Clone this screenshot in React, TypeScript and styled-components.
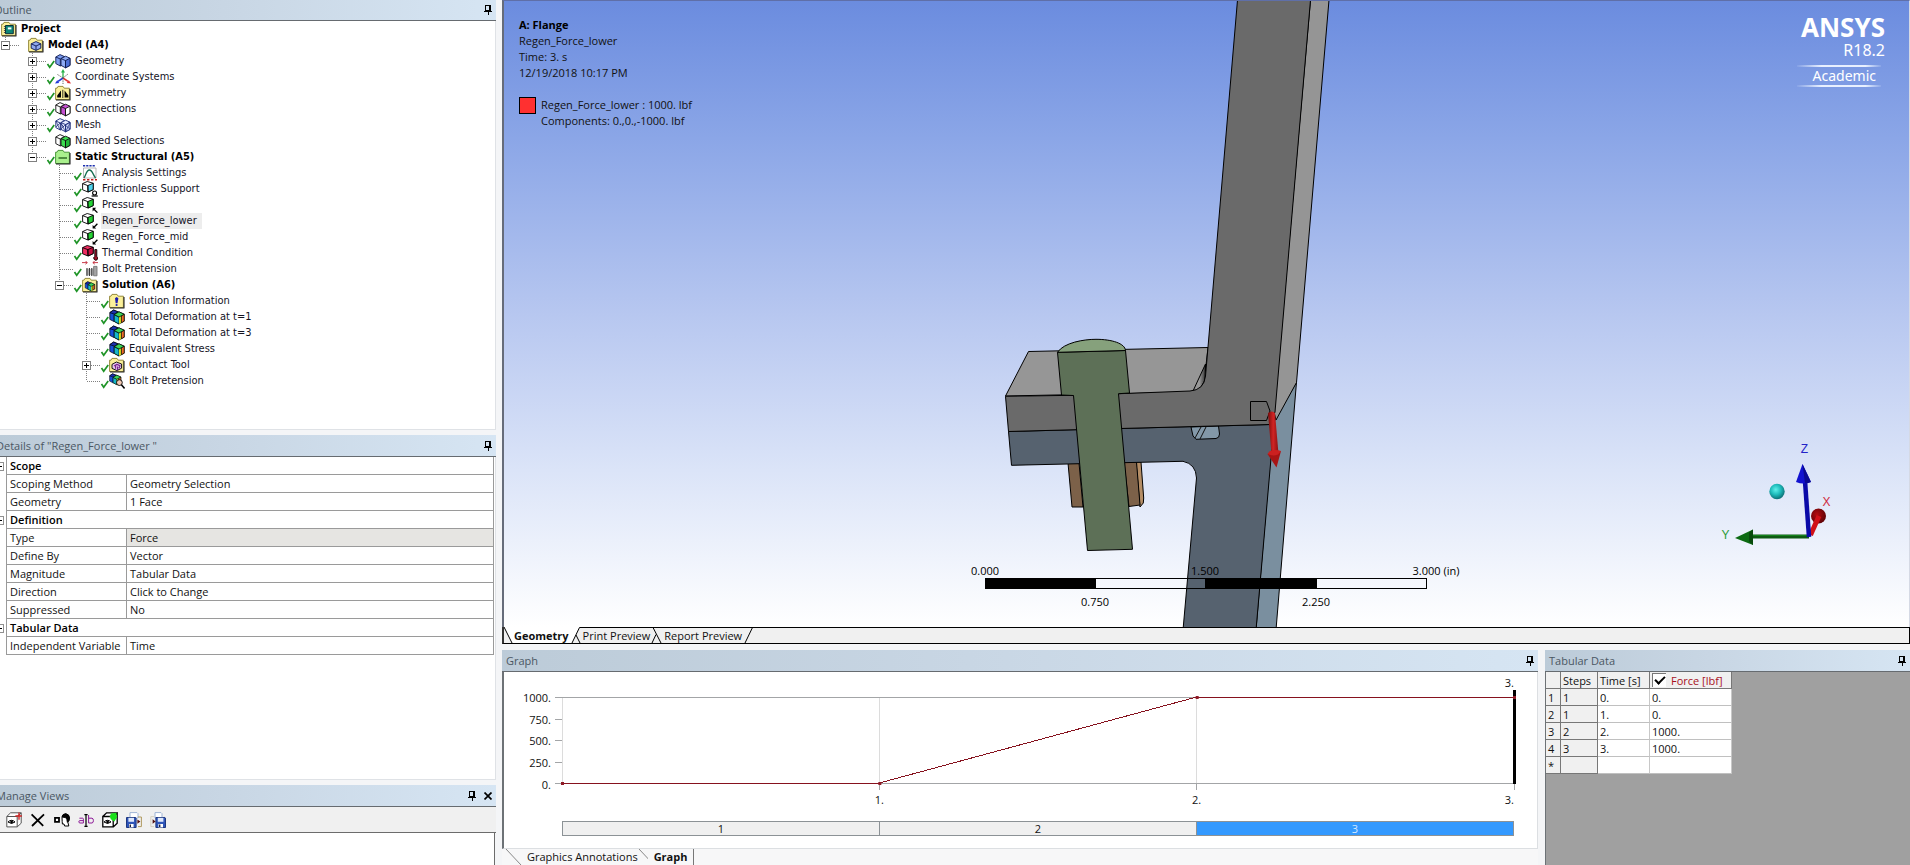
import React, { ReactNode } from 'react';
import styled, { createGlobalStyle, css } from 'styled-components';

const ui = '"Open Sans", "Noto Sans", sans-serif';
const treeFont = '"DejaVu Sans Condensed", "DejaVu Sans", sans-serif';

const Global = createGlobalStyle`
  * { box-sizing: border-box; }
  body { margin: 0; background: #f4f5f7; color: #111; font: 11px/16px ${ui}; }
  button { font: inherit; color: inherit; border: 0; padding: 0; background: none; }
  svg { display: block; flex: none; }
`;

/* ---------- shell ---------- */
const Shell = styled.div`
  display: grid;
  grid-template-columns: 496px minmax(0, 1fr);
  column-gap: 6px;
  height: 100vh;
  overflow: hidden;
`;
const SideColumn = styled.aside`
  display: grid;
  grid-template-rows: 430fr 345fr 80fr;
  row-gap: 5px;
  min-height: 0;
`;
const MainColumn = styled.main`
  display: grid;
  grid-template-rows: 644fr 215fr;
  row-gap: 6px;
  min-height: 0;
`;
const BottomRow = styled.div`
  display: grid;
  grid-template-columns: minmax(0, 1fr) 365px;
  column-gap: 7px;
  min-height: 0;
`;
const Panel = styled.section`
  display: flex;
  flex-direction: column;
  min-width: 0;
  min-height: 0;
  overflow: hidden;
`;
const TitleBar = styled.header<{ $short?: boolean }>`
  display: flex;
  align-items: center;
  gap: 8px;
  flex: none;
  height: ${(p) => (p.$short ? 21 : 22)}px;
  padding: 0 4px;
  border-bottom: 1px solid #666b70;
  background: linear-gradient(90deg, #bccbd8, #c8d6e4 45%, #d6e5f3);
  color: #4b5763;
`;
const Title = styled.h2<{ $cut: number }>`
  flex: 1;
  margin: 0 0 0 ${(p) => -p.$cut}px;
  font: 11px/16px ${ui};
  white-space: pre;
`;
const IconButton = styled.button`
  display: flex;
`;

const Pin = () => (
  <IconButton aria-label="Pin panel">
    <svg width="8" height="12" viewBox="0 0 8 12" fill="none" stroke="#000" shapeRendering="crispEdges">
      <path d="M1.5 1.5h4v5h-4zM0 7.5h8M4 8v3" />
      <path d="M5.5 1v6" strokeWidth="2" />
    </svg>
  </IconButton>
);
const Close = () => (
  <IconButton aria-label="Close panel">
    <svg width="8" height="8" viewBox="0 0 8 8" stroke="#000" strokeWidth="1.7">
      <path d="M0.5 .5l7 7M7.5 .5l-7 7" />
    </svg>
  </IconButton>
);

/* ---------- outline icons ---------- */
const Ico = ({ children }: { children: ReactNode }) => (
  <svg width="16" height="16" viewBox="0 0 16 16" fill="none" stroke="#000" strokeWidth="0.9" strokeLinejoin="round">
    {children}
  </svg>
);
const Folder = ({ fill = '#fbf09a', edge = '#8a7f2e', children }: { fill?: string; edge?: string; children?: ReactNode }) => (
  <Ico>
    <path d="M.6 14.5V3.2H2L3 1.4h5l1.2 1.8h5.2v11.3z" fill={fill} stroke={edge} />
    <path d="M1 15h14V4" stroke="#222" strokeWidth="1.1" />
    {children}
  </Ico>
);
const TwinCubes = ({ back, front, face, line = '#111', mesh }: { back: string; front: string; face: string; line?: string; mesh?: boolean }) => (
  <Ico>
    <g stroke={line}>
      <path d="M.8 4 5 1.6 9.5 3.6v7L5.3 13 .8 10.6z" fill={back} />
      <path d="M.8 4l4.5 2 4.2-2.4M5.3 6v7" />
      <path d="M6 5.6l4.6-2.4L15 5.2v7.2l-4.5 2.4L6 12.4z" fill={front} />
      <path d="M10.5 7.6 15 5.2v7.2l-4.5 2.4z" fill={face} />
      <path d="M6 5.6l4.5 2v7.2" />
      {mesh && <path d="M1 4l4 9M1 10l4-4 4 4M6 6l4 8M6 12l4-4 5 4M11 8l4-3M11 14l4-8" strokeWidth=".7" />}
    </g>
  </Ico>
);
const Contour = () => (
  <g strokeWidth=".7">
    <path d="M.8 3.6 4.6 1l4.8 2v7L5 12.6.8 10.4z" fill="#1550d8" />
    <path d="M.8 3.6 4.6 1l4.8 2L5.4 5.2z" fill="#1b2fae" />
    <path d="M5.2 5.6 10 2.8l5.2 2.4v7L10 15l-4.8-2.6z" fill="#21c048" />
    <path d="M5.2 5.6 10 8v7l-4.8-2.6z" fill="#16b7c9" />
    <path d="M10 8l2.4-1.3v7L10 15z" fill="#d8e020" stroke="none" />
    <path d="M12.4 6.7l2.8-1.5v7l-2.8 1.5z" fill="#f0692a" />
    <path d="M5.2 5.6 10 2.8l5.2 2.4L10 8z" fill="#3bd35a" />
  </g>
);
const LoadCube = ({ face = '#25d335', top = '#fff', children }: { face?: string; top?: string; children?: ReactNode }) => (
  <Ico>
    <path d="M.6 2.6 5.2.5l6 1.7v6.4L6 11 .6 8.8z" fill={top} />
    <path d="M5.8 4.6l5.4-2.4v6.4L6 11z" fill={face} />
    <path d="M.6 2.6 5.8 4.6 6 11" />
    {children}
  </Ico>
);
const ArrowUp = () => (
  <>
    <path d="M15.4 15.6l-3.400-3.400" strokeWidth="1.3" />
    <path d="M10.600 14.400v-3.600h3.600z" fill="#000" stroke="none" />
  </>
);
const ArrowDown = () => (
  <>
    <path d="M15.400 10.800l-3.400 3.400" strokeWidth="1.3" />
    <path d="M10.600 12v3.600h3.600z" fill="#000" stroke="none" />
  </>
);

const icons: Record<string, ReactNode> = {
  project: (
    <Folder>
      <path d="M4.5 4.5h7.8v8.2H4.5z" fill="#0d8576" stroke="#023" />
      <path d="M6.8 6.4h3.6v2H6.8z" fill="#fff" stroke="none" />
      <path d="M3.4 5v8" stroke="#333" strokeDasharray="1 1" />
    </Folder>
  ),
  model: (
    <Folder>
      <path d="M3.2 6.8 8 4.6l4.8 2.2v4.4L8 13.4l-4.8-2.2z" fill="#8fa8ee" stroke="#0b1650" />
      <path d="M3.2 6.8 8 9l4.8-2.2M8 9v4.4" stroke="#0b1650" />
    </Folder>
  ),
  geometry: <TwinCubes back="#7d9df0" front="#8eabf5" face="#4d70d8" line="#101c50" />,
  axes: (
    <Ico>
      <path d="M8 9V2" stroke="#28b04a" strokeWidth="1.3" />
      <path d="M8 0l-2 3.6h4z" fill="#28b04a" stroke="none" />
      <path d="M8 9l5 3.4" stroke="#e03030" strokeWidth="1.6" />
      <path d="M16 14.4l-4.2-.4 2-2.8z" fill="#e03030" stroke="none" />
      <path d="M8 9l-5 3.4" stroke="#2038d8" strokeWidth="1.6" />
      <path d="M0 14.4l4.2-.4-2-2.8z" fill="#2038d8" stroke="none" />
      <path d="M2.5 5.5 8 9l5-4M8 9v6" stroke="#555" strokeDasharray="1.4 1" />
    </Ico>
  ),
  symmetry: (
    <Folder>
      <path d="M6 5.400v7H2.200V10.400z M9.600 5.400v7h3.800V10.400z" fill="#000" stroke="none" />
      <path d="M7.800 4.800v8.200" strokeWidth=".8" />
    </Folder>
  ),
  connections: <TwinCubes back="#fff" front="#c44fd0" face="#fff" />,
  mesh: <TwinCubes back="#eef1ff" front="#e6ebff" face="#cfd8fb" line="#1c2b78" mesh />,
  named: <TwinCubes back="#fff" front="#3ddc50" face="#22b838" />,
  structural: (
    <Folder fill="#a9f08d" edge="#3c8a2c">
      <path d="M3.5 9h8.5" stroke="#144d10" strokeWidth="1.2" />
    </Folder>
  ),
  settings: (
    <Ico>
      <path d="M1 .8h12" stroke="#1b2fae" strokeWidth="1.5" strokeDasharray="2.2 1" />
      <path d="M1.5 3h12.5v10H1.5z" stroke="#9a9a9a" strokeWidth=".7" />
      <path d="M2 13C4 10 4.4 5 7.4 5S11 10 13.6 13" stroke="#146c50" strokeWidth="1.3" />
      <path d="M1 14.8h14" stroke="#c01818" strokeWidth="1.6" strokeDasharray="2.4 1.6" />
    </Ico>
  ),
  support: (
    <LoadCube face="#4fd4ee">
      <circle cx="12.6" cy="12" r="2" fill="#fff" strokeWidth="1.1" />
      <path d="M9.6 15h6.2" strokeWidth="1.2" />
    </LoadCube>
  ),
  pressure: <LoadCube><ArrowUp /></LoadCube>,
  force: <LoadCube><ArrowDown /></LoadCube>,
  thermal: (
    <LoadCube face="#c80f40" top="#ee2c60">
      <path d="M12.8 4.6h2v6.8a2 2 0 1 1-2 0z" fill="#a01028" />
    </LoadCube>
  ),
  bolt: (
    <Ico>
      <path d="M0 1.6h5M3.4 0l2 1.6-2 1.6M16 1.6h-5M12.8 0l-2 1.6 2 1.6" stroke="#c22838" />
      <path d="M4 8h9v6H4z" fill="#c9c9c9" stroke="none" />
      <path d="M5 7v8M7.4 7v8M9.8 7v8" stroke="#333" strokeWidth="1.1" />
      <path d="M11.6 5.4H15v9.4h-3.4z" fill="#a4a4a4" stroke="#777" />
    </Ico>
  ),
  solution: (
    <Folder>
      <g transform="translate(2.6 4) scale(.66)"><Contour /></g>
    </Folder>
  ),
  info: (
    <Folder>
      <path d="M7.6 4l1.8 1.2-.9 5h-1.8L6 5.2z" fill="#1a1ab0" stroke="none" />
      <circle cx="7.6" cy="12" r="1.1" fill="#1a1ab0" stroke="none" />
    </Folder>
  ),
  contour: <Ico><Contour /></Ico>,
  contact: (
    <Folder>
      <path d="M3 7.4 7.4 5l5.2 2v4.2L8 13.6 3 11.4z" fill="#e5c8ec" />
      <path d="M5 9l3-1.6 3 1.4-1 2.4M6.6 8.4v3.4M8.6 9.4v4" stroke="#7a2390" strokeWidth="1.2" />
    </Folder>
  ),
  probe: (
    <Ico>
      <g transform="scale(.78)"><Contour /></g>
      <circle cx="10.4" cy="9.6" r="2.9" fill="#f2c9b4" />
      <path d="M12.4 11.8l3.2 3.6" strokeWidth="1.6" />
    </Ico>
  ),
};

/* ---------- outline tree ---------- */
const Tree = styled.ul`
  flex: 1;
  margin: 0;
  padding: 0 0 0 1px;
  list-style: none;
  background: #fff;
  border-right: 1px solid #dfe2e6;
  border-bottom: 1px solid #dfe2e6;
  font: 11px/16px ${treeFont};
  overflow: hidden;
`;
const TreeRow = styled.li`
  display: flex;
  height: 16px;
  white-space: nowrap;
`;
const GuideCell = styled.span`
  display: flex;
  position: relative;
  flex: none;
  width: 27px;
  height: 16px;
`;
const Expander = styled.button`
  position: absolute;
  left: 0;
  top: 4px;
  width: 9px;
  height: 9px;
`;
const TreeLabel = styled.span<{ $bold?: boolean; $selected?: boolean }>`
  margin-left: 3px;
  padding: 0 5px 0 1px;
  color: #14141f;
  ${(p) => p.$bold && css`font-weight: 700; color: #000;`}
  ${(p) => p.$selected && css`background: #ededed;`}
`;

type Node = { d: number; t: string; i: string; x?: '+' | '-'; ok?: boolean; bold?: boolean; sel?: boolean };
const nodes: Node[] = [
  { d: 0, t: 'Project', i: 'project', bold: true },
  { d: 1, t: 'Model (A4)', i: 'model', x: '-', bold: true },
  { d: 2, t: 'Geometry', i: 'geometry', x: '+', ok: true },
  { d: 2, t: 'Coordinate Systems', i: 'axes', x: '+', ok: true },
  { d: 2, t: 'Symmetry', i: 'symmetry', x: '+', ok: true },
  { d: 2, t: 'Connections', i: 'connections', x: '+', ok: true },
  { d: 2, t: 'Mesh', i: 'mesh', x: '+', ok: true },
  { d: 2, t: 'Named Selections', i: 'named', x: '+' },
  { d: 2, t: 'Static Structural (A5)', i: 'structural', x: '-', ok: true, bold: true },
  { d: 3, t: 'Analysis Settings', i: 'settings', ok: true },
  { d: 3, t: 'Frictionless Support', i: 'support', ok: true },
  { d: 3, t: 'Pressure', i: 'pressure', ok: true },
  { d: 3, t: 'Regen_Force_lower', i: 'force', ok: true, sel: true },
  { d: 3, t: 'Regen_Force_mid', i: 'force', ok: true },
  { d: 3, t: 'Thermal Condition', i: 'thermal', ok: true },
  { d: 3, t: 'Bolt Pretension', i: 'bolt', ok: true },
  { d: 3, t: 'Solution (A6)', i: 'solution', x: '-', ok: true, bold: true },
  { d: 4, t: 'Solution Information', i: 'info', ok: true },
  { d: 4, t: 'Total Deformation at t=1', i: 'contour', ok: true },
  { d: 4, t: 'Total Deformation at t=3', i: 'contour', ok: true },
  { d: 4, t: 'Equivalent Stress', i: 'contour', ok: true },
  { d: 4, t: 'Contact Tool', i: 'contact', x: '+', ok: true },
  { d: 4, t: 'Bolt Pretension', i: 'probe', ok: true },
];
const continues = (row: number, level: number) => {
  for (let k = row + 1; k < nodes.length; k++) {
    if (nodes[k].d < level) return false;
    if (nodes[k].d === level) return true;
  }
  return false;
};

const Guide = ({ row, level }: { row: number; level: number }) => {
  const n = nodes[row];
  const own = n.d === level;
  const more = continues(row, level);
  return (
    <GuideCell>
      <svg width="27" height="16" viewBox="0 0 27 16" fill="none">
        <g stroke="#808080" strokeDasharray="1 1" shapeRendering="crispEdges">
          {own && <path d="M4.5 0v8" />}
          {own && <path d="M5 8.5h13" />}
          {more && <path d="M4.5 0v16" />}
        </g>
        {own && n.ok && <path d="M19.5 11l2.2 3.2L26.2 8" stroke="#1f9427" strokeWidth="1.7" />}
      </svg>
      {own && n.x && (
        <Expander aria-label={n.x === '+' ? 'Expand' : 'Collapse'}>
          <svg width="9" height="9" viewBox="0 0 9 9" fill="#fff" shapeRendering="crispEdges">
            <path d="M.5.5h8v8h-8z" stroke="#808080" />
            <path d={n.x === '+' ? 'M2 4.5h5M4.5 2v5' : 'M2 4.5h5'} stroke="#000" />
          </svg>
        </Expander>
      )}
    </GuideCell>
  );
};

/* ---------- details ---------- */
const DetailsBody = styled.div`
  flex: 1;
  background: #fff;
  border-right: 1px solid #dfe2e6;
  border-bottom: 1px solid #dfe2e6;
`;
const DetailsTable = styled.table`
  width: calc(100% - 1px);
  border-spacing: 0;
  table-layout: fixed;
  td, th {
    height: 18px;
    padding: 0 3px;
    border-right: 1px solid #9a9a9a;
    border-bottom: 1px solid #9a9a9a;
    line-height: 16px;
    text-align: left;
    font-weight: 400;
    white-space: nowrap;
  }
`;
const GroupHead = styled.th`
  && { font-weight: 600; color: #000; }
`;
const GutterCell = styled.td`
  && { padding: 0; border-bottom: 0; }
`;
const ValueCell = styled.td<{ $readonly?: boolean }>`
  background: ${(p) => (p.$readonly ? '#e6e5e2' : '#fff')};
`;
const GroupToggle = () => (
  <IconButton aria-label="Collapse group">
    <svg width="5" height="9" viewBox="0 0 5 9" fill="none" shapeRendering="crispEdges">
      <path d="M0 .5h3.5v8H0" stroke="#909090" />
      <path d="M0 4.5h2" stroke="#000" />
    </svg>
  </IconButton>
);
const details: [string, string?, boolean?][] = [
  ['Scope'],
  ['Scoping Method', 'Geometry Selection'],
  ['Geometry', '1 Face'],
  ['Definition'],
  ['Type', 'Force', true],
  ['Define By', 'Vector'],
  ['Magnitude', 'Tabular Data'],
  ['Direction', 'Click to Change'],
  ['Suppressed', 'No'],
  ['Tabular Data'],
  ['Independent Variable', 'Time'],
];

/* ---------- manage views ---------- */
const Toolbar = styled.div`
  display: flex;
  align-items: center;
  height: 26px;
  flex: none;
  padding-left: 2px;
  background: #f0f0f0;
  border-bottom: 1px solid #6c6c6c;
`;
const ToolButton = styled.button`
  display: flex;
  justify-content: center;
  width: 24px;
`;
const ViewList = styled.div`
  flex: 1;
  margin-right: 1px;
  background: #fff;
  border-right: 1px solid #6c6c6c;
`;
const Eye = () => (
  <>
    <path d="M2 10q3.5-3.4 7 0-3.5 3-7 0z" fill="#fff" stroke="#000" />
    <circle cx="5.6" cy="10" r="1.4" fill="#000" stroke="none" />
  </>
);
const Disk = ({ x }: { x: number }) => (
  <g transform={`translate(${x} 5)`}>
    <path d="M.5.5h9l.6.6v9.4H.5z" fill="#2f55b8" stroke="#1d3780" />
    <path d="M2.4.8h5.6v4H2.4z" fill="#dfe8fb" stroke="none" />
    <path d="M3 7h4.6v3.4H3z" fill="#fff" stroke="none" />
    <path d="M3.6 7.6h1.4v2.4H3.6z" fill="#223" stroke="none" />
  </g>
);
const tools: [string, ReactNode][] = [
  ['Create view', <>
    <path d="M.8 4.5h10.4v10.4H.8zM.8 4.5 4.6.8h10.6L11.2 4.5M15.2.8v10.4l-4 3.7" fill="#fff" stroke="#555" />
    <path d="M13 .6v7.2M9.4 4h6.4" stroke="#d02020" strokeWidth="1.3" />
    <Eye />
  </>],
  ['Delete view', <path d="M1.6 2.4l11.6 11.4M14 2.4 2 14" strokeWidth="1.8" />],
  ['Apply view', <>
    <path d="M1 5.8h4v4H1z" strokeWidth="1.8" fill="#fff" />
    <path d="M8 5.5Q8 2 11.5 2T15.4 6q0 2.6-1.6 4l1 4h-4.2l-.6-2H8.4l-.2-2.6z" fill="#fff" />
    <path d="M8 5q1-3.6 4-3.2 3.6.6 3.4 4.4-.2 3-2 4-.2-3-1.6-4.6z" fill="#000" />
  </>],
  ['Rename view', <>
    <path d="M8 3v11M6.4 2.6h3.2M6.4 14.4h3.2" strokeWidth="1.2" />
    <path d="M1.4 6.2h3.2q.8 0 .8.9V11H2q-1.2-.1-1.2-1.2T2 8.6h3.4" stroke="#8e1c98" />
    <path d="M10.6 3v8H14q1.4-.2 1.4-2.4T14 6.2h-3.4" stroke="#8e1c98" />
  </>],
  ['Replace view', <>
    <path d="M.8 4.5h10.4v10.4H.8zM.8 4.5 4.6.8h10.6L11.2 4.5M15.2.8v10.4l-4 3.7" fill="#fff" strokeWidth="1.3" />
    <path d="M9 1.6 14.4.8l.6 4.4-2.6 4.4-3.6-2.4-1-3z" fill="#18e018" stroke="none" />
    <Eye />
  </>],
  ['Import views', <>
    <path d="M4 .6h7l1 1V6H4z" fill="#fff" stroke="#9fb4d6" />
    <path d="M12 5h3.4v9.6H12" stroke="#b09a60" />
    <Disk x={0} />
    <path d="M11.4 7.4v4.4L14.4 9.6z" fill="#501010" stroke="none" />
  </>],
  ['Export views', <>
    <path d="M5 .6h6l1 1V6H5z" fill="#fff" stroke="#9fb4d6" />
    <path d="M4 4.6H.8v10H4" stroke="#d6d0c0" />
    <Disk x={5.4} />
    <path d="M2.6 7.2v4.6l3-2.3z" fill="#501010" stroke="none" />
  </>],
];

/* ---------- 3D viewport ---------- */
const Viewport = styled.div`
  position: relative;
  flex: 1;
  min-height: 0;
  overflow: hidden;
  border-left: 2px solid #666c7a;
  border-top: 1px solid #5f6fa8;
  border-right: 1px solid #d5d9e4;
  background: linear-gradient(#6b8cdf, #8ba6e7 22%, #b7c7f0 50%, #dbe4f8 75%, #ffffff);
`;
const Scene = styled.svg`
  width: 100%;
  height: 100%;
`;
const Caption = styled.div`
  position: absolute;
  left: 15px;
  top: 16px;
  white-space: nowrap;
`;
const CaptionTitle = styled.strong`
  display: block;
  font-weight: 700;
  color: #000;
`;
const Legend = styled.div`
  display: flex;
  align-items: flex-start;
  gap: 5px;
  margin-top: 16px;
`;
const Swatch = styled.span`
  width: 17px;
  height: 17px;
  border: 1px solid #000;
  background: #ff3030;
`;
const Brand = styled.div`
  position: absolute;
  right: 24px;
  top: 12px;
  display: flex;
  flex-direction: column;
  align-items: flex-end;
  color: #fff;
  font-family: "Noto Sans", sans-serif;
`;
const BrandName = styled.span`
  font-size: 26px;
  font-weight: 700;
  line-height: 28px;
`;
const BrandRelease = styled.span`
  font-size: 16px;
  line-height: 18px;
`;
const BrandEdition = styled.span`
  margin: 6px 4px 0 0;
  padding: 0 5px 0 16px;
  font-size: 14px;
  line-height: 18px;
  border: solid transparent;
  border-width: 2px 0;
  border-image: linear-gradient(90deg, transparent, #e8f0ff 30%, #e8f0ff 80%, transparent) 2;
`;
const Triad = styled.svg`
  position: absolute;
  right: 64px;
  bottom: 77px;
`;

const ModelScene = () => (
  <Scene viewBox="504 1 1405 626" preserveAspectRatio="xMidYMid slice">
    <defs>
      <linearGradient id="fillet" x1="0" x2="1">
        <stop offset="0" stopColor="#8f8f8f" />
        <stop offset="0.5" stopColor="#9b9b9b" />
        <stop offset="1" stopColor="#333" />
      </linearGradient>
      <linearGradient id="shaft" x1="0" x2="1">
        <stop offset="0" stopColor="#7c0c0c" />
        <stop offset="0.5" stopColor="#d02424" />
        <stop offset="1" stopColor="#8c1010" />
      </linearGradient>
    </defs>
    <g stroke="#000" strokeWidth="1" strokeLinejoin="round">
      {/* nut */}
      <path d="M1068 463l11 0 4 44-11 0z" fill="#7c6149" />
      <path d="M1136 462l5 0 2.700 36-.4 5-3.300 4z" fill="#b58e66" />
      <path d="M1124 462l12.500 0 3.500 43-11 1.500z" fill="#7c6149" />
      {/* lower body */}
      <path d="M1273 424 1276 418 1296.500 382 1276 630H1256z" fill="#7a8f9f" />
      <path d="M1008.500 431.500 1271 424.500 1274 424 1256 630H1183L1196.500 478Q1196 464 1183 461.300L1011.500 465.300z" fill="#56626f" />
      <path d="M1191 427 1193 436 1196 439.300 1216 438.500Q1219.500 438 1219.500 434L1218.500 426z" fill="#8398a8" />
      <path d="M1201 427l-6 11M1206 427l-6 12" stroke="#111" fill="none" />
      {/* upper body */}
      <path d="M1005.500 396 1028.500 351.500 1208 347.500 1203 392z" fill="#969696" />
      <path d="M1193 391 1205.500 364 1205 380 1199 391z" fill="url(#fillet)" />
      <path d="M1310.500 0H1329L1296.500 382.500 1276 420 1274 412z" fill="#959595" />
      <path d="M1237.500 0H1310.500L1275 412 1270 424.500 1008.500 431.500 1005.500 396.300 1073 395.300 1130 393.300 1190 391Q1204 390 1205.500 376L1208 347z" fill="#6a6a6a" />
      <path d="M1250.500 401.500H1266.500L1270 411 1266.500 420.500H1250.500z" fill="none" />
      {/* bolt */}
      <path d="M1057.500 352.300 1125.500 350.500 1129.500 393 1118.500 393.700 1132.500 549.300 1087.500 550.500 1073.500 395.500 1061.500 395z" fill="#5d7057" />
      <path d="M1057.500 352.300C1064 342.500 1084 339.300 1096 339.300 1112 339.300 1125 343.500 1125.500 350.500z" fill="#86a17c" />
    </g>
    {/* force arrow */}
    <path d="M1268 413q4-3 7 0l3.500 41h-7z" fill="url(#shaft)" />
    <path d="M1267.500 454 1281 451 1276.500 467.500z" fill="#a81414" />
    <path d="M1267.500 454q2-3.500 6-4t7.500 1l-3 3.500q-5 2-10.500-.5z" fill="#cc2020" />
    {/* scale ruler */}
    <g shapeRendering="crispEdges">
      <path d="M985.500 578.500h441v10h-441zM1095.500 578v11" fill="none" stroke="#000" />
      <path d="M985 578h111v11H985zM1205 578h112v11h-112z" fill="#000" />
    </g>
    <g fontFamily='"Open Sans", sans-serif' fontSize="11" fill="#000" textAnchor="middle">
      <text x="985" y="575">0.000</text>
      <text x="1205" y="575">1.500</text>
      <text x="1436" y="575">3.000 (in)</text>
      <text x="1095" y="606">0.750</text>
      <text x="1316" y="606">2.250</text>
    </g>
  </Scene>
);

const AxisTriad = () => (
  <Triad width="130" height="114" viewBox="1715 436 130 114">
    <defs>
      <radialGradient id="cyanBall" cx=".42" cy=".38" r=".65">
        <stop offset="0" stopColor="#5ff0ea" />
        <stop offset=".5" stopColor="#1fbcbc" />
        <stop offset="1" stopColor="#0a6a70" />
      </radialGradient>
      <radialGradient id="redBall" cx=".4" cy=".4" r=".65">
        <stop offset="0" stopColor="#b40c10" />
        <stop offset="1" stopColor="#5c0206" />
      </radialGradient>
    </defs>
    <circle cx="1777" cy="491.500" r="7.700" fill="url(#cyanBall)" />
    <circle cx="1818.500" cy="516" r="7.500" fill="url(#redBall)" />
    <path d="M1819 516l-8.500 19" stroke="#d01018" strokeWidth="5" />
    <path d="M1809 536.500H1752" stroke="#0d5a12" strokeWidth="4" />
    <path d="M1809 535.500H1753" stroke="#14831c" strokeWidth="1" />
    <path d="M1735 538l18-8.500V545z" fill="#0c6a12" />
    <path d="M1753 529.500V545l-4-3.500v-9z" fill="#084a0c" />
    <path d="M1805 481l4 56" stroke="#0a0aa8" strokeWidth="4.500" />
    <path d="M1802.500 464l8.500 18q-7.500 3-15 0z" fill="#1212d0" />
    <path d="M1802.500 464l8.500 18q-3 1.300-6 1.300z" fill="#0a0a90" />
    <g fontFamily='"Liberation Sans", sans-serif' fontSize="12" textAnchor="middle">
      <text x="1725.500" y="539" fill="#2b9c38">Y</text>
      <text x="1804.500" y="453" fill="#2323c8">Z</text>
      <text x="1826.500" y="506" fill="#d02a40">X</text>
    </g>
  </Triad>
);

const ViewTabs = styled.nav`
  display: flex;
  flex: none;
  height: 17px;
  border-left: 2px solid #333;
  border-right: 1px solid #000;
  border-bottom: 1px solid #000;
  background: #f0f0f0;
`;
const ViewTab = styled.button<{ $active?: boolean }>`
  padding: 0 1px;
  line-height: 15px;
  white-space: nowrap;
  background: ${(p) => (p.$active ? '#fff' : '#f0f0f0')};
  font-weight: ${(p) => (p.$active ? 700 : 400)};
  border-top: 1px solid ${(p) => (p.$active ? '#fff' : '#000')};
`;
const TabFiller = styled.span`
  flex: 1;
  border-top: 1px solid #000;
`;
const Slant = ({ kind }: { kind: 'start' | 'after' | 'between' | 'end' }) => {
  const w = kind === 'start' ? 9 : 12;
  return (
    <svg width={w} height="16" viewBox={`0 0 ${w} 16`} fill="none" stroke="#000">
      {kind === 'start' && <><path d="M0 0h9v16H0z" fill="#fff" stroke="none" /><path d="M0 0l8 16H0z" fill="#f0f0f0" stroke="none" /><path d="M0 0l8 16" /></>}
      {kind === 'after' && <><path d="M0 0h9L2 16H0z" fill="#fff" stroke="none" /><path d="M2 16 9.500.5H12M6 8l4 8" /></>}
      {kind === 'between' && <path d="M0 .5h12M2 .5 10 16M1 16l4-8.500" />}
      {kind === 'end' && <path d="M0 .5h12M2 16 9.500.5" />}
    </svg>
  );
};

/* ---------- graph ---------- */
const GraphBody = styled.div`
  flex: 1;
  min-height: 0;
  padding: 25px 23px 0 58px;
  background: #fff;
  border: solid #dcdfe2;
  border-width: 0 1px 1px 2px;
  border-left-color: #6d7276;
`;
const Plot = styled.svg`
  width: 100%;
  height: 86px;
  overflow: visible;
`;
const StepBar = styled.div`
  display: grid;
  grid-template-columns: repeat(3, 1fr);
  height: 15px;
  margin-top: 38px;
  border-left: 1px solid #8c9296;
`;
const Step = styled.button<{ $active?: boolean }>`
  border: solid #8c9296;
  border-width: 1px 1px 1px 0;
  line-height: 13px;
  background: ${(p) => (p.$active ? '#3399ff' : '#f0f0f0')};
  color: ${(p) => (p.$active ? '#d6e8ff' : '#111')};
`;
const GraphTabs = styled.nav`
  display: flex;
  flex: none;
  height: 16px;
  padding-left: 3px;
  background: #f7f7f8;
`;
const GraphTab = styled.button<{ $active?: boolean }>`
  padding: ${(p) => (p.$active ? '0 6px' : '0')};
  line-height: 16px;
  white-space: nowrap;
  font-weight: ${(p) => (p.$active ? 700 : 400)};
  ${(p) => p.$active && css`border-right: 1px solid #777;`}
`;
const LightSlant = ({ width }: { width: number }) => (
  <svg width={width} height="16" viewBox={`0 0 ${width} 16`} stroke="#888">
    <path d="M1 0l15 16" />
  </svg>
);
const third = (n: number) => `${(n * 100) / 3}%`;

const GraphPlot = () => (
  <Plot fontFamily='"Open Sans", sans-serif' fontSize="11" fill="#111">
    <g shapeRendering="crispEdges">
      <g stroke="#dcdcdc">
        <line x1="0" x2="0" y1="0" y2="86" />
        <line x1={third(1)} x2={third(1)} y1="0" y2="86" />
        <line x1={third(2)} x2={third(2)} y1="0" y2="86" />
      </g>
      <g stroke="#a3a5a7">
        <line x1="0" x2="100%" y1="0" y2="0" />
        <line x1="0" x2="100%" y1="86" y2="86" />
        {[0, 22, 43, 65, 86].map((y) => <line key={y} x1="-7" x2="0" y1={y} y2={y} />)}
        {[1, 2, 3].map((n) => <line key={n} x1={third(n)} x2={third(n)} y1="86" y2="93" />)}
      </g>
    </g>
    <rect x="100%" y="-7" width="3" height="94" transform="translate(-1)" fill="#000" />
    <g stroke="#86121e" shapeRendering="crispEdges">
      <line x1="0" x2={third(1)} y1="86" y2="86" />
      <line x1={third(1)} x2={third(2)} y1="86" y2="0" />
      <line x1={third(2)} x2="100%" y1="0" y2="0" />
    </g>
    {[[0, 86], [1, 86], [2, 0], [3, 0]].map(([n, y]) => (
      <rect key={n} x={third(n)} y={y - 1} width="3" height="3" transform="translate(-1)" fill="#8e1a26" />
    ))}
    <g textAnchor="end">
      {['1000.', '750.', '500.', '250.', '0.'].map((t, k) => (
        <text key={t} x="-11" y={5 + Math.round(k * 21.700)}>{t}</text>
      ))}
      <text x="100%" y="-10">3.</text>
      <text x="100%" y="107">3.</text>
    </g>
    <g textAnchor="middle">
      <text x={third(1)} y="107">1.</text>
      <text x={third(2)} y="107">2.</text>
    </g>
  </Plot>
);

/* ---------- tabular data ---------- */
const GridBody = styled.div`
  flex: 1;
  background: #a0a0a0;
  border-left: 1px solid #6d7276;
`;
const DataTable = styled.table`
  border-spacing: 0;
  table-layout: fixed;
  width: 186px;
  td, th {
    height: 17px;
    padding: 0 0 0 2px;
    line-height: 15px;
    text-align: left;
    font-weight: 400;
    white-space: nowrap;
    border-right: 1px solid #c8c8c8;
    border-bottom: 1px solid #c0c0c0;
    background: #fff;
  }
`;
const HeadCell = styled.th`
  && {
    background: #f0f0f0;
    border-color: #777;
  }
`;
const ForceLabel = styled.label`
  display: flex;
  align-items: center;
  gap: 5px;
  color: #a8101c;
`;
const Check = styled.input`
  appearance: none;
  display: grid;
  place-items: center;
  width: 14px;
  height: 14px;
  margin: 0;
  background: #fff;
  border: solid #777;
  border-width: 1px 0 0 1px;
  &:checked::after {
    content: '';
    width: 8px;
    height: 4px;
    margin-top: -3px;
    border: solid #000;
    border-width: 0 0 2px 2px;
    transform: rotate(-45deg);
  }
`;
const rows = [
  ['1', '1', '0.', '0.'],
  ['2', '1', '1.', '0.'],
  ['3', '2', '2.', '1000.'],
  ['4', '3', '3.', '1000.'],
  ['*', '', '', ''],
];

export default function App() {
  return (
    <>
      <Global />
      <Shell>
        <SideColumn>
          <Panel>
            <TitleBar $short>
              <Title $cut={10}>Outline</Title>
              <Pin />
            </TitleBar>
            <Tree>
              {nodes.map((n, r) => (
                <TreeRow key={r}>
                  {Array.from({ length: n.d }, (_, k) => <Guide key={k} row={r} level={k + 1} />)}
                  {icons[n.i]}
                  <TreeLabel $bold={n.bold} $selected={n.sel}>{n.t}</TreeLabel>
                </TreeRow>
              ))}
            </Tree>
          </Panel>

          <Panel>
            <TitleBar>
              <Title $cut={8}>{'Details of "Regen_Force_lower "'}</Title>
              <Pin />
            </TitleBar>
            <DetailsBody>
              <DetailsTable>
                <colgroup>
                  <col style={{ width: 7 }} />
                  <col style={{ width: 120 }} />
                  <col />
                </colgroup>
                <tbody>
                  {details.map(([name, value, readonly]) =>
                    value ? (
                      <tr key={name}>
                        <GutterCell />
                        <th scope="row">{name}</th>
                        <ValueCell $readonly={readonly}>{value}</ValueCell>
                      </tr>
                    ) : (
                      <tr key={name}>
                        <GutterCell><GroupToggle /></GutterCell>
                        <GroupHead colSpan={2}>{name}</GroupHead>
                      </tr>
                    ),
                  )}
                </tbody>
              </DetailsTable>
            </DetailsBody>
          </Panel>

          <Panel>
            <TitleBar>
              <Title $cut={8}>Manage Views</Title>
              <Pin />
              <Close />
            </TitleBar>
            <Toolbar>
              {tools.map(([name, art]) => (
                <ToolButton key={name} aria-label={name}>
                  <svg width="16" height="16" viewBox="0 0 16 16" fill="none" stroke="#000">{art}</svg>
                </ToolButton>
              ))}
            </Toolbar>
            <ViewList />
          </Panel>
        </SideColumn>

        <MainColumn>
          <Panel>
            <Viewport>
              <ModelScene />
              <Caption>
                <CaptionTitle>A: Flange</CaptionTitle>
                Regen_Force_lower<br />
                Time: 3. s<br />
                12/19/2018 10:17 PM
                <Legend>
                  <Swatch />
                  <span>
                    Regen_Force_lower : 1000. lbf<br />
                    Components: 0.,0.,-1000. lbf
                  </span>
                </Legend>
              </Caption>
              <Brand>
                <BrandName>ANSYS</BrandName>
                <BrandRelease>R18.2</BrandRelease>
                <BrandEdition>Academic</BrandEdition>
              </Brand>
              <AxisTriad />
            </Viewport>
            <ViewTabs>
              <Slant kind="start" />
              <ViewTab $active>Geometry</ViewTab>
              <Slant kind="after" />
              <ViewTab>Print Preview</ViewTab>
              <Slant kind="between" />
              <ViewTab>Report Preview</ViewTab>
              <Slant kind="end" />
              <TabFiller />
            </ViewTabs>
          </Panel>

          <BottomRow>
            <Panel>
              <TitleBar>
                <Title $cut={0}>Graph</Title>
                <Pin />
              </TitleBar>
              <GraphBody>
                <GraphPlot />
                <StepBar>
                  <Step>1</Step>
                  <Step>2</Step>
                  <Step $active>3</Step>
                </StepBar>
              </GraphBody>
              <GraphTabs>
                <LightSlant width={22} />
                <GraphTab>Graphics Annotations</GraphTab>
                <LightSlant width={10} />
                <GraphTab $active>Graph</GraphTab>
              </GraphTabs>
            </Panel>
            <Panel>
              <TitleBar>
                <Title $cut={0}>Tabular Data</Title>
                <Pin />
              </TitleBar>
              <GridBody>
                <DataTable>
                  <colgroup>
                    <col style={{ width: 15 }} />
                    <col style={{ width: 37 }} />
                    <col style={{ width: 52 }} />
                    <col style={{ width: 82 }} />
                  </colgroup>
                  <thead>
                    <tr>
                      <HeadCell />
                      <HeadCell scope="col">Steps</HeadCell>
                      <HeadCell scope="col">Time [s]</HeadCell>
                      <HeadCell scope="col">
                        <ForceLabel><Check type="checkbox" defaultChecked />Force [lbf]</ForceLabel>
                      </HeadCell>
                    </tr>
                  </thead>
                  <tbody>
                    {rows.map(([no, step, time, force]) => (
                      <tr key={no}>
                        <HeadCell scope="row">{no}</HeadCell>
                        <HeadCell as="td">{step}</HeadCell>
                        <td>{time}</td>
                        <td>{force}</td>
                      </tr>
                    ))}
                  </tbody>
                </DataTable>
              </GridBody>
            </Panel>
          </BottomRow>
        </MainColumn>
      </Shell>
    </>
  );
}
